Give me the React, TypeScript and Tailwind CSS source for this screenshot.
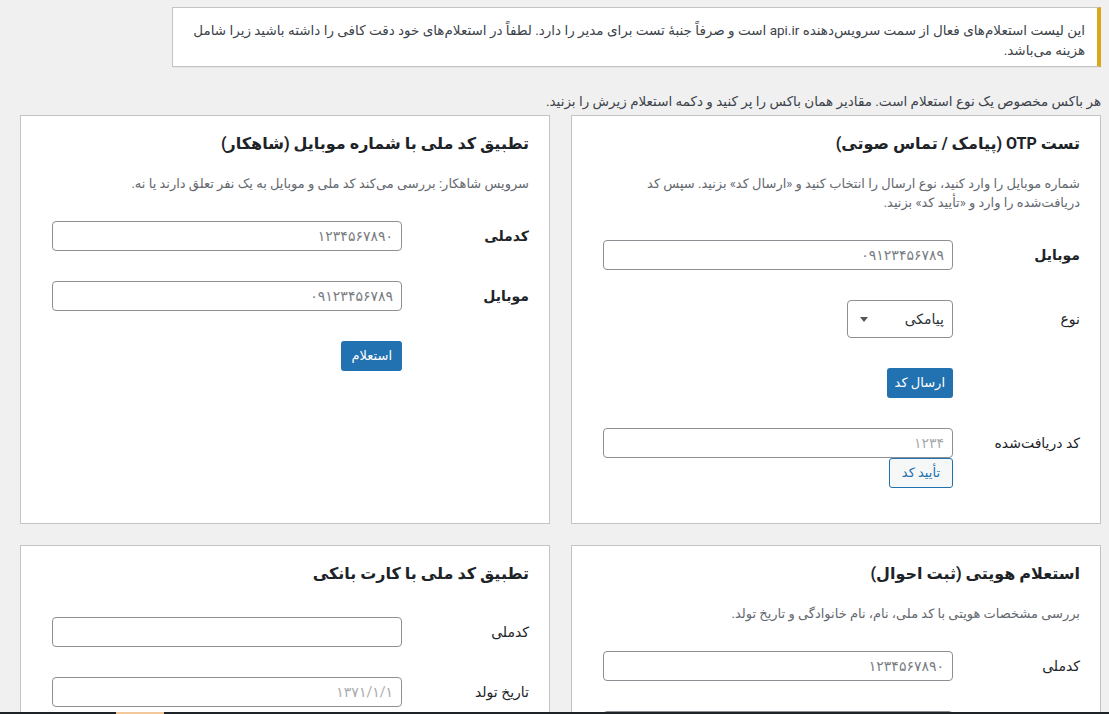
import { ReactNode } from 'react'

const fa = { fontFamily: 'Roboto, "DejaVu Sans", sans-serif' }

function Field({ label, children, bold = true, labelH = 'leading-[30px]' }: { label: string; children: ReactNode; bold?: boolean; labelH?: string }) {
  return (
    <div className="grid grid-cols-[127px_1fr] items-start py-[15px]">
      <div className={`text-[14px] text-[#1d2327] ${labelH} ${bold ? 'font-semibold' : 'font-normal'}`}>{label}</div>
      <div>{children}</div>
    </div>
  )
}

function TextInput({ placeholder, light = false }: { placeholder?: string; light?: boolean }) {
  return (
    <input
      type="text"
      placeholder={placeholder}
      className={`block h-[30px] w-[350px] rounded-[4px] border border-[#8c8f94] bg-white px-2 text-[14px] outline-none ${light ? 'placeholder:text-[#a7aaad]' : 'placeholder:text-[#787c82]'}`}
    />
  )
}

function Card({ title, desc, children }: { title: string; desc?: ReactNode; children: ReactNode }) {
  return (
    <div className="border border-[#c3c4c7] bg-white px-5 pt-4 pb-5">
      <h2 className="text-[16px] font-bold leading-6 text-[#1d2327]">{title}</h2>
      {desc && <p className="mt-[18px] text-[13px] leading-[19px] text-[#646970]">{desc}</p>}
      <div className={desc ? 'mt-[13px]' : 'mt-4'}>{children}</div>
    </div>
  )
}

function PrimaryButton({ children, pad = 'px-[10px]' }: { children: ReactNode; pad?: string }) {
  return (
    <button className={`h-[30px] rounded-[3px] bg-[#2271b1] text-[13px] text-white ${pad}`}>
      {children}
    </button>
  )
}

export default function App() {
  return (
    <div dir="rtl" style={fa} className="min-h-screen bg-[#f0f0f1] pt-[7px] pr-2 pl-5 text-[13.5px] text-[#3c434a]">
      {/* Notice */}
      <div className="ml-auto w-[929px] border border-[#c3c4c7] border-r-4 border-r-[#dba617] bg-white px-3 pt-[12px] pb-[6px] leading-5 shadow-[0_1px_1px_rgba(0,0,0,0.04)]">
        این لیست استعلام‌های فعال از سمت سرویس‌دهنده api.ir است و صرفاً جنبهٔ تست برای مدیر را دارد. لطفاً در استعلام‌های خود دقت کافی را داشته باشید زیرا شامل هزینه می‌باشد.
      </div>

      <p className="mt-[24px] mb-[4px] leading-5">
        هر باکس مخصوص یک نوع استعلام است. مقادیر همان باکس را پر کنید و دکمه استعلام زیرش را بزنید.
      </p>

      <div className="grid grid-cols-2 gap-[21px]">
        {/* OTP */}
        <Card
          title="تست OTP (پیامک / تماس صوتی)"
          desc="شماره موبایل را وارد کنید، نوع ارسال را انتخاب کنید و «ارسال کد» بزنید. سپس کد دریافت‌شده را وارد و «تأیید کد» بزنید."
        >
          <Field label="موبایل">
            <TextInput placeholder="۰۹۱۲۳۴۵۶۷۸۹" />
          </Field>
          <Field label="نوع" bold={false} labelH="leading-[38px]">
            <div className="flex h-[38px] w-[106px] items-center justify-between rounded-[4px] border border-[#8c8f94] bg-white pr-2 pl-3 text-[14px] text-[#2c3338]">
              <span>پیامکی</span>
              <svg width="8" height="5" viewBox="0 0 8 5"><path d="M0 0h8L4 5z" fill="#50575e" /></svg>
            </div>
          </Field>
          <Field label="">
            <PrimaryButton pad="px-[8px]">ارسال کد</PrimaryButton>
          </Field>
          <Field label="کد دریافت‌شده" bold={false}>
            <TextInput placeholder="۱۲۳۴" light />
            <button className="block h-[30px] rounded-[3px] border border-[#2271b1] bg-[#f6f7f7] px-[12px] text-[13px] text-[#2271b1]">
              تأیید کد
            </button>
          </Field>
        </Card>

        {/* Shahkar */}
        <Card
          title="تطبیق کد ملی با شماره موبایل (شاهکار)"
          desc="سرویس شاهکار: بررسی می‌کند کد ملی و موبایل به یک نفر تعلق دارند یا نه."
        >
          <Field label="کدملی">
            <TextInput placeholder="۱۲۳۴۵۶۷۸۹۰" />
          </Field>
          <Field label="موبایل">
            <TextInput placeholder="۰۹۱۲۳۴۵۶۷۸۹" />
          </Field>
          <Field label="">
            <PrimaryButton>استعلام</PrimaryButton>
          </Field>
        </Card>

        {/* Identity */}
        <Card title="استعلام هویتی (ثبت احوال)" desc="بررسی مشخصات هویتی با کد ملی، نام، نام خانوادگی و تاریخ تولد.">
          <Field label="کدملی" bold={false}>
            <TextInput placeholder="۱۲۳۴۵۶۷۸۹۰" />
          </Field>
          <Field label="نام" bold={false}>
            <TextInput />
          </Field>
        </Card>

        {/* Bank card */}
        <Card title="تطبیق کد ملی با کارت بانکی">
          <Field label="کدملی" bold={false}>
            <TextInput />
          </Field>
          <Field label="تاریخ تولد" bold={false}>
            <TextInput placeholder="۱۳۷۱/۱/۱" light />
          </Field>
        </Card>
      </div>

      {/* taskbar edge */}
      <div dir="ltr" className="fixed inset-x-0 bottom-0 flex h-[2px] bg-[#1d2327]">
        <div className="ml-[116px] w-[48px] bg-[#f3c89a]" />
      </div>
    </div>
  )
}
